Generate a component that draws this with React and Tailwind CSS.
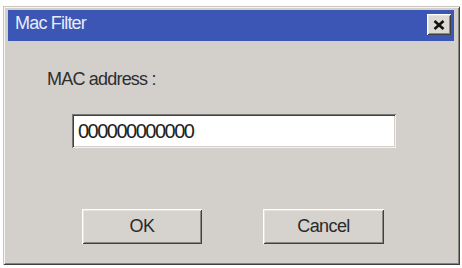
import React, { useState } from 'react'

// classic raised / sunken bevels
const raised =
    "shadow-[inset_1px_1px_0_#ffffff,inset_-1px_-1px_0_#404040,inset_2px_2px_0_#e6e3de,inset_-2px_-2px_0_#8a8884]";
const sunken =
    "shadow-[inset_1px_1px_0_#7a7874,inset_-1px_-1px_0_#f4f2ee,inset_2px_2px_0_#404040,inset_-2px_-2px_0_#d3d0cb]";

const CloseButton = () => (
    <button
        type="button"
        className={`w-[24px] h-[21px] bg-[#dcd9d4] flex items-center justify-center ${raised}`}
    >
        <svg width="12" height="10" viewBox="0 0 12 10">
            <path d="M1.5 1 L10.5 9 M10.5 1 L1.5 9" stroke="#111" strokeWidth="2.6" />
        </svg>
    </button>
)

const DialogButton = ({ label, className = "" }) => (
    <button
        type="button"
        className={`h-[35px] bg-[#d6d3ce] text-[18px] tracking-[-0.6px] text-[#2a2a2a] ${raised} ${className}`}
    >
        {label}
    </button>
)

const App = () => {
    const [mac, setMac] = useState("000000000000");

    return (
        <div
            className="w-[462px] h-[268px] bg-white pt-[6px] pl-[3px]"
            style={{ fontFamily: '"Liberation Sans", Arial, sans-serif' }}
        >
            <div className="w-[457px] h-[259px] bg-[#d3d0cb] pt-[4px] pl-[5px] pr-[6px] flex flex-col shadow-[inset_1px_1px_0_#c8c5c0,inset_-1px_-1px_0_#404040,inset_2px_2px_0_#f6f5f2,inset_-2px_-2px_0_#86847f]">
                {/* title bar */}
                <div className="h-[31px] bg-[#3b56b4] flex items-start justify-between">
                    <span className="pl-[7px] pt-[2px] text-[18px] leading-[22px] tracking-[-0.8px] text-[#e8ecf8]">
                        Mac Filter
                    </span>
                    <div className="pt-[4px] pr-[3px]">
                        <CloseButton />
                    </div>
                </div>

                {/* body */}
                <div className="flex flex-col">
                    <div className="ml-[39px] mt-[27px] text-[18px] leading-[22px] tracking-[-0.8px] text-[#2e2e2e]">
                        MAC address :
                    </div>
                    <input
                        type="text"
                        value={mac}
                        onChange={(e) => setMac(e.target.value)}
                        className={`ml-[64px] mt-[24px] w-[324px] h-[34px] bg-white px-[6px] text-[20px] tracking-[-1.5px] text-[#222] outline-none ${sunken}`}
                    />
                    <div className="flex ml-[74px] mt-[61px] gap-[61px]">
                        <DialogButton label="OK" className="w-[120px]" />
                        <DialogButton label="Cancel" className="w-[121px]" />
                    </div>
                </div>
            </div>
        </div>
    )
}

export default App
